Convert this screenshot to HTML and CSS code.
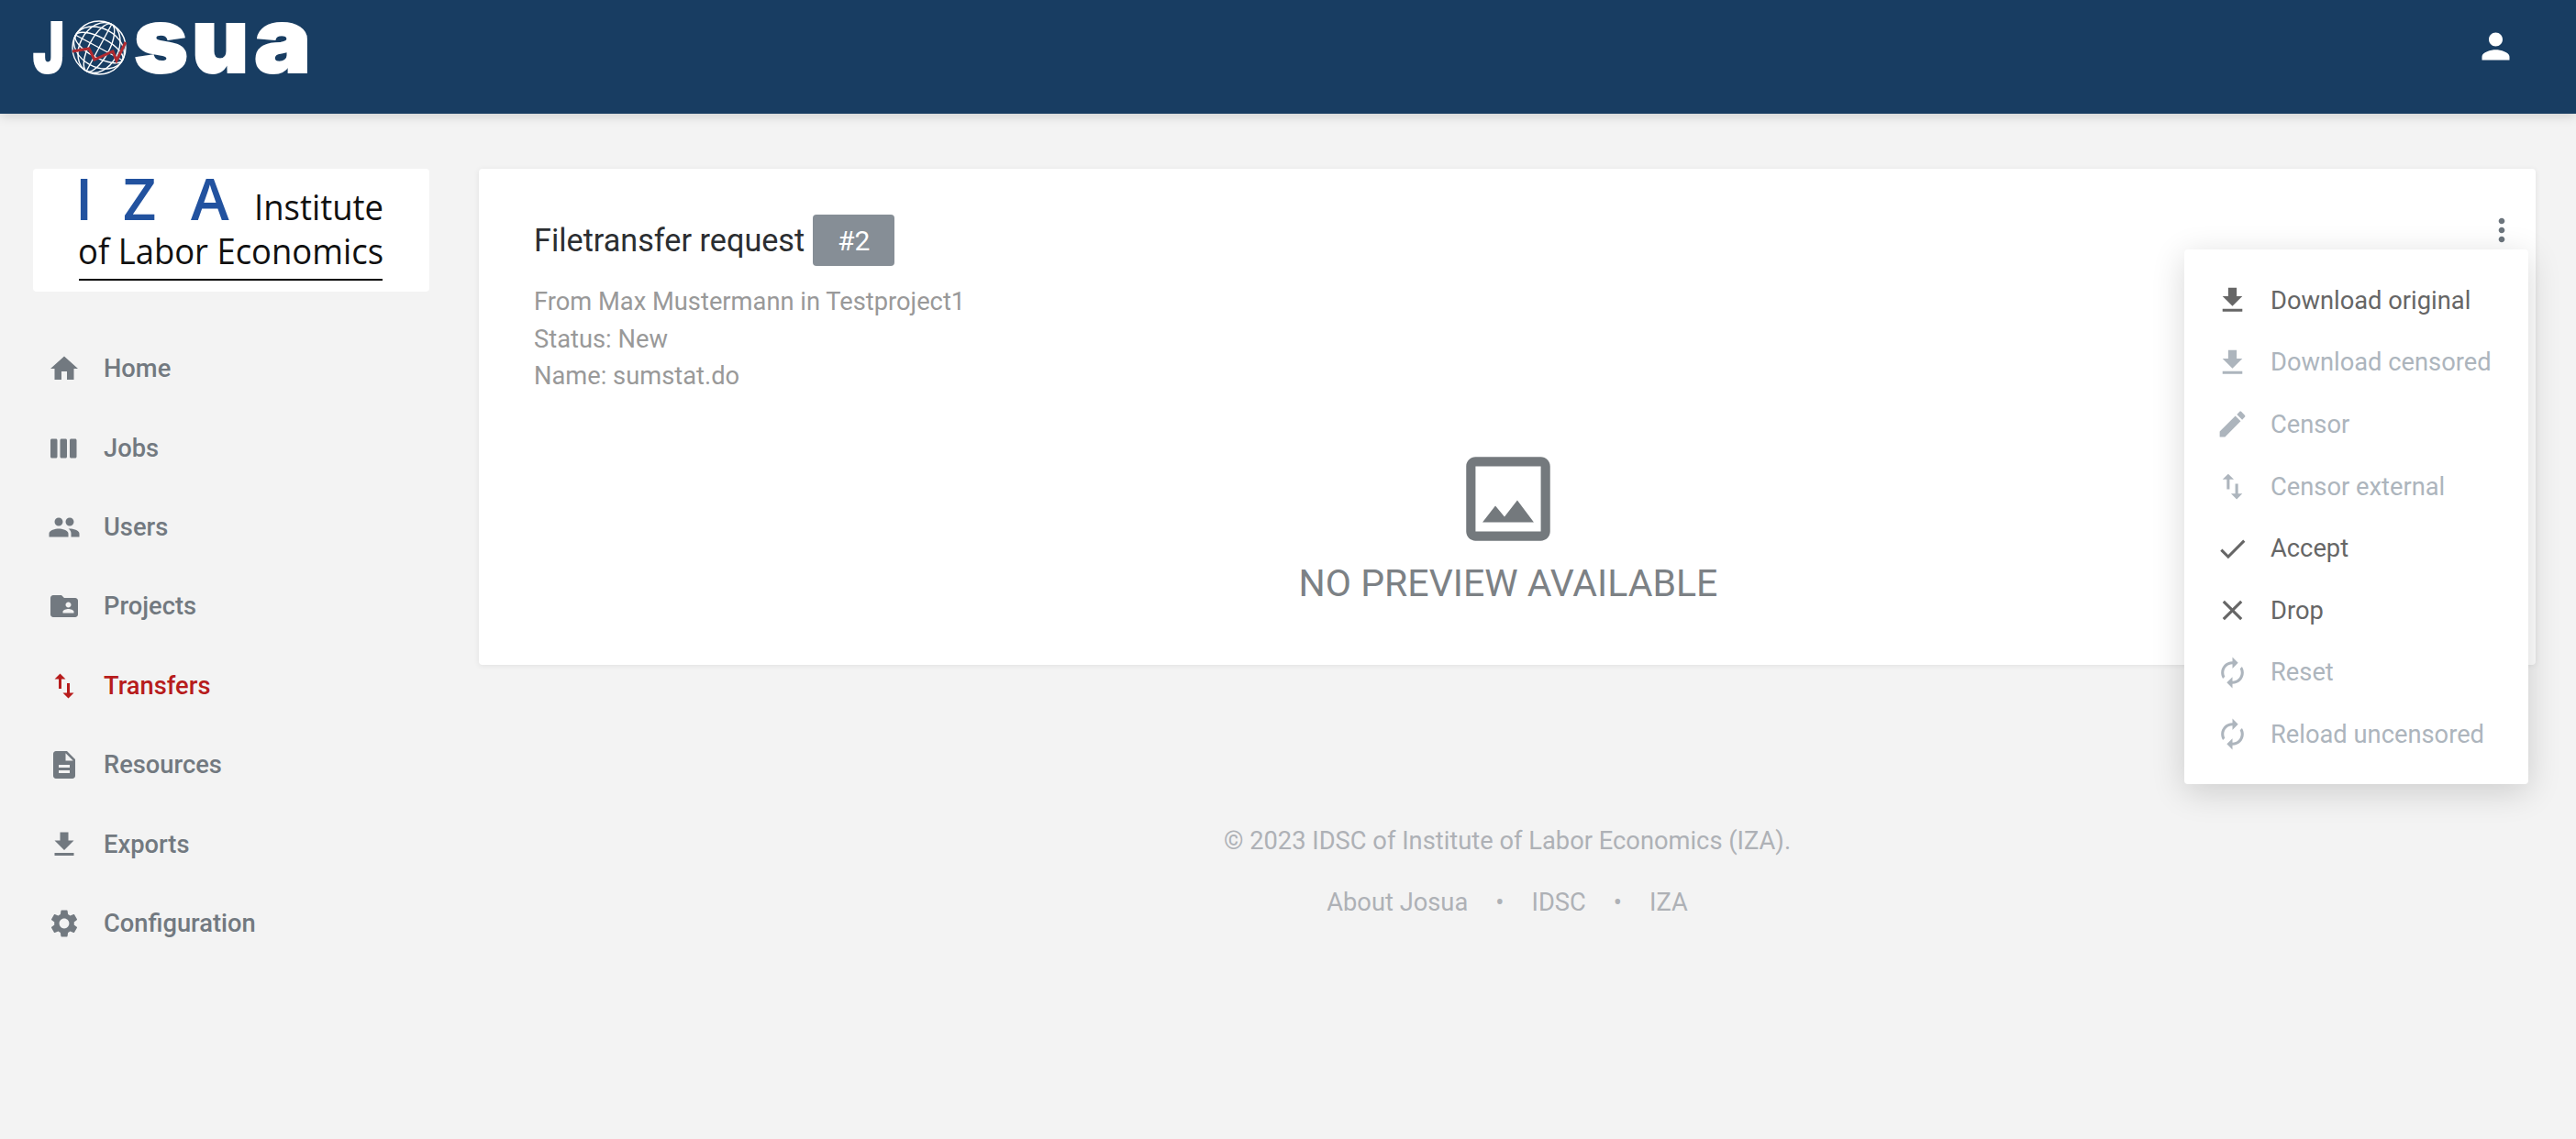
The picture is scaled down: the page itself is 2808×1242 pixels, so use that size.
FILE: index.html
```html
<!DOCTYPE html>
<html lang="en">
<head>
    <meta charset="UTF-8">
    <title>Josua - Filetransfer request</title>
    <link rel="stylesheet" href="styles.css">
</head>
<body>
    <header class="topbar">
        <svg class="logo" width="304" height="64" viewBox="36 20 304 64">
            <g class="logo-letters">
                <text x="36" y="79" font-size="75" textLength="34" lengthAdjust="spacingAndGlyphs">J</text>
                <text x="146" y="79" font-size="98" textLength="59" lengthAdjust="spacingAndGlyphs">s</text>
                <text x="209" y="79" font-size="98" textLength="62" lengthAdjust="spacingAndGlyphs">u</text>
                <text x="277" y="79" font-size="98" textLength="62" lengthAdjust="spacingAndGlyphs">a</text>
            </g>
            <g class="globe">
                <circle cx="108" cy="52" r="29"/>
                <ellipse cx="108" cy="52" rx="29" ry="11" transform="rotate(28 108 52)"/>
                <ellipse cx="108" cy="52" rx="29" ry="21" transform="rotate(28 108 52)"/>
                <ellipse cx="108" cy="52" rx="11" ry="29" transform="rotate(28 108 52)"/>
                <ellipse cx="108" cy="52" rx="21" ry="29" transform="rotate(28 108 52)"/>
                <line x1="82" y1="38" x2="134" y2="66"/>
                <line x1="122" y1="26" x2="94" y2="78"/>
            </g>
            <path class="trend" d="M79 56 L97 53 L103 65 L123 56 L127 66 L137 46"/>
        </svg>
        <button class="user-btn">
            <svg viewBox="0 0 24 24" width="45" height="45"><path d="M12 12c2.21 0 4-1.79 4-4s-1.79-4-4-4-4 1.79-4 4 1.79 4 4 4zm0 2c-2.67 0-8 1.34-8 4v2h16v-2c0-2.66-5.33-4-8-4z"/></svg>
        </button>
    </header>

    <div class="layout">
        <aside class="sidebar">
            <div class="iza-box">
                <svg class="iza-logo" width="432" height="134" viewBox="0 0 432 134">
                    <g class="iza-mark">
                        <text x="46" y="56" font-size="63">I</text>
                        <text x="98" y="56" font-size="63">Z</text>
                        <text x="172" y="56" font-size="63">A</text>
                    </g>
                    <g class="iza-name">
                        <text x="241" y="56" font-size="38" textLength="141" lengthAdjust="spacingAndGlyphs">Institute</text>
                        <text x="49" y="104" font-size="38" textLength="333" lengthAdjust="spacingAndGlyphs">of Labor Economics</text>
                    </g>
                    <rect x="50" y="120" width="331" height="2"/>
                </svg>
            </div>
            <nav class="side-nav">
                <a class="nav-item" href="#"><svg viewBox="0 0 24 24"><path d="M10 20v-6h4v6h5v-8h3L12 3 2 12h3v8z"/></svg>Home</a>
                <a class="nav-item" href="#"><svg viewBox="0 0 24 24"><path d="M6 5H3c-.55 0-1 .45-1 1v12c0 .55.45 1 1 1h3c.55 0 1-.45 1-1V6c0-.55-.45-1-1-1zm14 0h-3c-.55 0-1 .45-1 1v12c0 .55.45 1 1 1h3c.55 0 1-.45 1-1V6c0-.55-.45-1-1-1zm-7 0h-3c-.55 0-1 .45-1 1v12c0 .55.45 1 1 1h3c.55 0 1-.45 1-1V6c0-.55-.45-1-1-1z"/></svg>Jobs</a>
                <a class="nav-item" href="#"><svg viewBox="0 0 24 24"><path d="M16 11c1.66 0 2.99-1.34 2.99-3S17.66 5 16 5c-1.66 0-3 1.34-3 3s1.34 3 3 3zm-8 0c1.66 0 2.99-1.34 2.99-3S9.66 5 8 5C6.34 5 5 6.34 5 8s1.34 3 3 3zm0 2c-2.33 0-7 1.17-7 3.5V19h14v-2.5c0-2.33-4.67-3.5-7-3.5zm8 0c-.29 0-.62.02-.97.05 1.16.84 1.97 1.97 1.97 3.45V19h6v-2.5c0-2.33-4.67-3.5-7-3.5z"/></svg>Users</a>
                <a class="nav-item" href="#"><svg viewBox="0 0 24 24"><path d="M20 6h-8l-2-2H4c-1.1 0-1.99.9-1.99 2L2 18c0 1.1.9 2 2 2h16c1.1 0 2-.9 2-2V8c0-1.1-.9-2-2-2zm-5 3c1.1 0 2 .9 2 2s-.9 2-2 2-2-.9-2-2 .9-2 2-2zm4 8h-8v-1c0-1.33 2.67-2 4-2s4 .67 4 2v1z"/></svg>Projects</a>
                <a class="nav-item active" href="#"><svg viewBox="0 0 24 24"><path d="M16 17.01V10h-2v7.01h-3L15 21l4-3.99h-3zM9 3L5 6.99h3V14h2V6.99h3L9 3z"/></svg>Transfers</a>
                <a class="nav-item" href="#"><svg viewBox="0 0 24 24"><path d="M14 2H6c-1.1 0-1.99.9-1.99 2L4 20c0 1.1.89 2 1.99 2H18c1.1 0 2-.9 2-2V8l-6-6zm2 16H8v-2h8v2zm0-4H8v-2h8v2zm-3-5V3.5L18.5 9H13z"/></svg>Resources</a>
                <a class="nav-item" href="#"><svg viewBox="0 0 24 24"><path d="M19 9h-4V3H9v6H5l7 7 7-7zM5 18v2h14v-2H5z"/></svg>Exports</a>
                <a class="nav-item" href="#"><svg viewBox="0 0 24 24"><path d="M19.14 12.94c.04-.3.06-.61.06-.94 0-.32-.02-.64-.07-.94l2.03-1.58c.18-.14.23-.41.12-.61l-1.92-3.32c-.12-.22-.37-.29-.59-.22l-2.39.96c-.5-.38-1.03-.7-1.62-.94l-.36-2.54c-.04-.24-.24-.41-.48-.41h-3.84c-.24 0-.43.17-.47.41l-.36 2.54c-.59.24-1.13.57-1.62.94l-2.39-.96c-.22-.08-.47 0-.59.22L2.74 8.87c-.12.21-.08.47.12.61l2.03 1.58c-.05.3-.09.63-.09.94s.02.64.07.94l-2.03 1.58c-.18.14-.23.41-.12.61l1.92 3.32c.12.22.37.29.59.22l2.39-.96c.5.38 1.03.7 1.62.94l.36 2.54c.05.24.24.41.48.41h3.84c.24 0 .44-.17.47-.41l.36-2.54c.59-.24 1.13-.56 1.62-.94l2.39.96c.22.08.47 0 .59-.22l1.92-3.32c.12-.22.07-.47-.12-.61l-2.01-1.58zM12 15.6c-1.98 0-3.6-1.62-3.6-3.6s1.62-3.6 3.6-3.6 3.6 1.62 3.6 3.6-1.62 3.6-3.6 3.6z"/></svg>Configuration</a>
            </nav>
        </aside>

        <main class="content">
            <section class="card">
                <button class="more-btn">
                    <svg viewBox="0 0 24 24" width="40" height="40"><path d="M12 8c1.1 0 2-.9 2-2s-.9-2-2-2-2 .9-2 2 .9 2 2 2zm0 2c-1.1 0-2 .9-2 2s.9 2 2 2 2-.9 2-2-.9-2-2-2zm0 6c-1.1 0-2 .9-2 2s.9 2 2 2 2-.9 2-2-.9-2-2-2z"/></svg>
                </button>
                <h1 class="title">Filetransfer request <span class="badge">#2</span></h1>
                <p class="meta">From Max Mustermann in Testproject1</p>
                <p class="meta">Status: New</p>
                <p class="meta">Name: sumstat.do</p>
                <div class="no-preview">
                    <svg viewBox="0 0 24 24" width="122" height="122"><path d="M19 3H5c-1.1 0-2 .9-2 2v14c0 1.1.9 2 2 2h14c1.1 0 2-.9 2-2V5c0-1.1-.9-2-2-2zm0 16H5V5h14v14zm-5.04-6.71l-2.75 3.54-1.96-2.36L6.5 17h11l-3.54-4.71z"/></svg>
                    <div class="no-preview-text">NO PREVIEW AVAILABLE</div>
                </div>

                <ul class="menu">
                    <li class="menu-item"><svg viewBox="0 0 24 24"><path d="M19 9h-4V3H9v6H5l7 7 7-7zM5 18v2h14v-2H5z"/></svg>Download original</li>
                    <li class="menu-item disabled"><svg viewBox="0 0 24 24"><path d="M19 9h-4V3H9v6H5l7 7 7-7zM5 18v2h14v-2H5z"/></svg>Download censored</li>
                    <li class="menu-item disabled"><svg viewBox="0 0 24 24"><path d="M3 17.25V21h3.75L17.81 9.94l-3.75-3.75L3 17.25zM20.71 7.04c.39-.39.39-1.02 0-1.41l-2.34-2.34c-.39-.39-1.02-.39-1.41 0l-1.83 1.83 3.75 3.75 1.83-1.83z"/></svg>Censor</li>
                    <li class="menu-item disabled"><svg viewBox="0 0 24 24"><path d="M16 17.01V10h-2v7.01h-3L15 21l4-3.99h-3zM9 3L5 6.99h3V14h2V6.99h3L9 3z"/></svg>Censor external</li>
                    <li class="menu-item"><svg viewBox="0 0 24 24"><path d="M9 16.17L4.83 12l-1.42 1.41L9 19 21 7l-1.41-1.41z"/></svg>Accept</li>
                    <li class="menu-item"><svg viewBox="0 0 24 24"><path d="M19 6.41L17.59 5 12 10.59 6.41 5 5 6.41 10.59 12 5 17.59 6.41 19 12 13.41 17.59 19 19 17.59 13.41 12z"/></svg>Drop</li>
                    <li class="menu-item disabled"><svg viewBox="0 0 24 24"><path d="M12 6v3l4-4-4-4v3c-4.42 0-8 3.58-8 8 0 1.57.46 3.03 1.24 4.26L6.7 14.8c-.45-.83-.7-1.79-.7-2.8 0-3.31 2.69-6 6-6zm6.76 1.74L17.3 9.2c.44.84.7 1.79.7 2.8 0 3.31-2.69 6-6 6v-3l-4 4 4 4v-3c4.42 0 8-3.58 8-8 0-1.57-.46-3.03-1.24-4.26z"/></svg>Reset</li>
                    <li class="menu-item disabled"><svg viewBox="0 0 24 24"><path d="M12 6v3l4-4-4-4v3c-4.42 0-8 3.58-8 8 0 1.57.46 3.03 1.24 4.26L6.7 14.8c-.45-.83-.7-1.79-.7-2.8 0-3.31 2.69-6 6-6zm6.76 1.74L17.3 9.2c.44.84.7 1.79.7 2.8 0 3.31-2.69 6-6 6v-3l-4 4 4 4v-3c4.42 0 8-3.58 8-8 0-1.57-.46-3.03-1.24-4.26z"/></svg>Reload uncensored</li>
                </ul>
            </section>

            <footer class="footer">
                <p class="copyright">© 2023 IDSC of Institute of Labor Economics (IZA).</p>
                <p class="footer-links">
                    <a href="#">About Josua</a><span class="dot">•</span><a href="#">IDSC</a><span class="dot">•</span><a href="#">IZA</a>
                </p>
            </footer>
        </main>
    </div>
</body>
</html>
```

FILE: styles.css
```css
* {
    box-sizing: border-box;
}
body {
    margin: 0;
    height: 1242px;
    overflow: hidden;
    background-color: #f3f3f3;
    font-family: Roboto, "Liberation Sans", sans-serif;
    font-size: 27.3px;
}
svg {
    fill: currentColor;
    flex-shrink: 0;
}
button {
    background: none;
    border: none;
    padding: 0;
}

/* top bar */
.topbar {
    height: 124px;
    background-color: #183d62;
    box-shadow: 0 2px 12px rgba(0, 0, 0, 0.16);
    display: flex;
    justify-content: space-between;
    align-items: flex-start;
    padding: 20px 65px 0 36px;
}
.logo {
    display: block;
    overflow: visible;
}
.logo-letters {
    font-family: Inter, sans-serif;
    font-weight: 900;
    fill: #fff;
    stroke: #fff;
    stroke-width: 2;
}
.globe {
    fill: none;
    stroke: #fff;
    stroke-width: 1.4;
}
.trend {
    fill: none;
    stroke: #b02a30;
    stroke-width: 3;
}
.user-btn {
    color: #fff;
    display: block;
    height: 45px;
    margin-top: 8px;
}

.layout {
    display: flex;
    padding-top: 60px;
}

/* sidebar */
.sidebar {
    width: 522px;
    flex-shrink: 0;
    padding-left: 36px;
}
.iza-box {
    width: 432px;
    height: 134px;
    background-color: #fff;
    border-radius: 4px;
}
.iza-logo {
    display: block;
}
.iza-mark {
    font-family: "Open Sans", sans-serif;
    font-weight: 600;
    fill: #22529f;
}
.iza-name {
    font-family: "Open Sans", sans-serif;
    fill: #111;
}
.side-nav {
    margin-top: 41px;
}
.nav-item {
    display: flex;
    align-items: center;
    height: 86.4px;
    color: #727980;
    font-weight: 500;
    text-decoration: none;
}
.nav-item svg {
    width: 36px;
    height: 36px;
    margin-left: 16px;
    margin-right: 25px;
}
.nav-item.active {
    color: #b71c1c;
}

/* card */
.content {
    flex: 1;
    padding-right: 44px;
}
.card {
    position: relative;
    height: 541px;
    padding: 50px 58px 0 60px;
    background-color: #fff;
    border-radius: 4px;
    box-shadow: 0 1px 6px rgba(0, 0, 0, 0.08);
}
.title {
    display: flex;
    align-items: center;
    gap: 9px;
    margin: 0 0 19px;
    height: 56px;
    font-size: 34.2px;
    font-weight: 400;
    color: #2b2e31;
}
.badge {
    width: 89px;
    height: 56px;
    display: flex;
    align-items: center;
    justify-content: center;
    background-color: #868e96;
    border-radius: 4px;
    color: #fff;
    font-size: 30px;
    font-weight: 400;
}
.meta {
    margin: 0;
    height: 40.5px;
    line-height: 40.5px;
    color: #999;
}
.no-preview {
    margin-top: 52px;
    display: flex;
    flex-direction: column;
    align-items: center;
    color: #74797d;
}
.no-preview svg {
    display: block;
}
.no-preview-text {
    margin-top: 6px;
    font-size: 41px;
    font-weight: 400;
    line-height: 50px;
    color: #7c8185;
}
.more-btn {
    position: absolute;
    top: 47px;
    right: 17px;
    height: 40px;
    color: #6c757d;
}
.more-btn svg {
    display: block;
}

/* dropdown over the card */
.menu {
    position: absolute;
    top: 88px;
    right: 8px;
    width: 375px;
    height: 583px;
    margin: 0;
    padding: 22px 0 0 34px;
    list-style: none;
    background-color: #fff;
    border-radius: 4px;
    box-shadow: 0 8px 36px rgba(0, 0, 0, 0.16);
}
.menu-item {
    display: flex;
    align-items: center;
    height: 67.6px;
    color: #666;
    white-space: nowrap;
}
.menu-item svg {
    width: 37px;
    height: 37px;
    margin-right: 23px;
}
.menu-item.disabled {
    color: #adb5bd;
}

/* footer */
.footer {
    margin-top: 165px;
    text-align: center;
    color: #aeb1b6;
}
.footer p {
    margin: 0;
    height: 54px;
    line-height: 54px;
}
.footer .footer-links {
    margin-top: 13px;
}
.footer-links a {
    color: inherit;
    text-decoration: none;
}
.dot {
    margin: 0 30px;
}
```
